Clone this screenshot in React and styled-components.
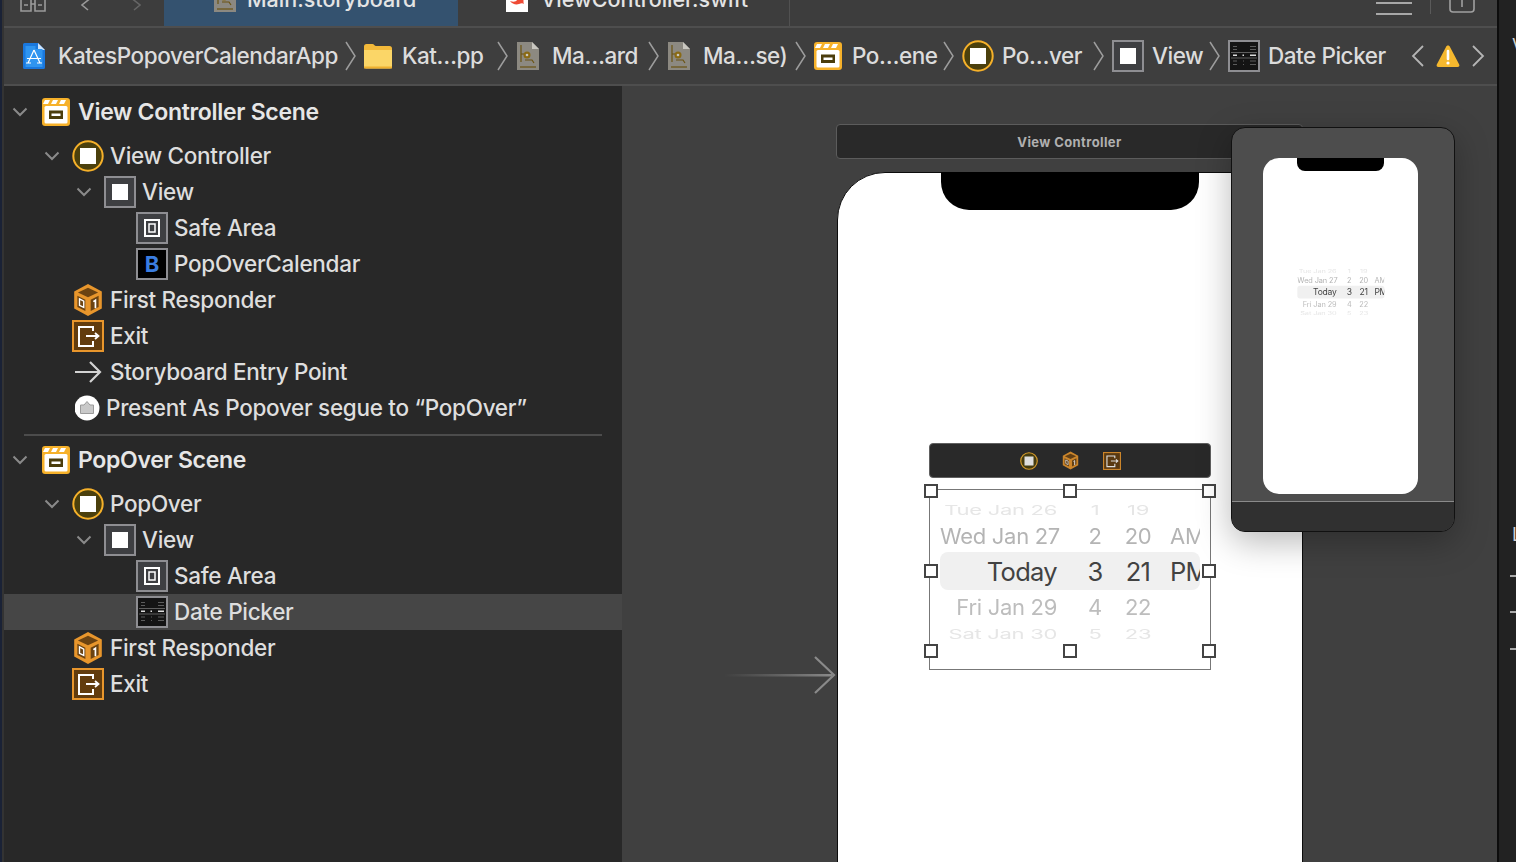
import React from 'react'
import styled, {createGlobalStyle} from 'styled-components'

const GlobalStyle = createGlobalStyle`
  html, body { margin: 0; padding: 0; background: #1f1f1f; }
  body { font-family: Inter, "Liberation Sans", sans-serif; }
`

const ORANGE = '#e8962c'
const YELLOW = '#f6b12a'

/* ---------- icons ---------- */

function ProjectIcon() {
  return (
    <svg width="24" height="28" viewBox="0 0 24 28">
      <path d="M1 2.500A1.500 1.500 0 0 1 2.500 1H16l7 7v17.500A1.500 1.500 0 0 1 21.500 27H2.500A1.500 1.500 0 0 1 1 25.500z" fill="#1a78de" />
      <path d="M16 1l7 7h-7z" fill="#cfe4fb" />
      <path d="M3.500 4h10v3h7v18h-17z" fill="#2f95f0" />
      <path d="M12 8L6 21M12 8l6 13M5 16.500h14M4 21h5M15 21h5" stroke="#fff" strokeWidth="1.200" fill="none" />
    </svg>
  )
}

function FolderIcon() {
  return (
    <svg width="28" height="26" viewBox="0 0 28 26">
      <path d="M0 3.500A2.500 2.500 0 0 1 2.500 1h6c1.500 0 2 2 3.500 2h13.500A2.500 2.500 0 0 1 28 5.500V9H0z" fill="#f3b93a" />
      <path d="M0 7h28v16.500a2 2 0 0 1-2 2H2a2 2 0 0 1-2-2z" fill="#fbd667" />
      <rect y="23.500" width="28" height="2" fill="#efb02f" />
    </svg>
  )
}

function StoryboardIcon() {
  return (
    <svg width="24" height="30" viewBox="0 0 24 30">
      <path d="M1 1h15l7 7v21H1z" fill="#8c8981" />
      <path d="M16 1l7 7h-7z" fill="#c9c7c0" />
      <path d="M5 4v9h3M5 13v8M9 19h7l2 3" stroke="#6b5312" strokeWidth="1.200" fill="none" />
      <circle cx="11" cy="14" r="3.500" fill="#8a6a14" />
      <circle cx="11" cy="14" r="1.300" fill="#c9c7c0" />
      <path d="M4 26h16" stroke="#6b5312" strokeWidth="1.200" />
    </svg>
  )
}

function SceneIcon() {
  return (
    <svg width="28" height="28" viewBox="0 0 28 28">
      <rect x="0" y="0" width="28" height="28" rx="3" fill={YELLOW} />
      <path d="M3 2h5l-2 4H1zM11 2h5l-2 4H9zM19 2h5l-2 4h-5z" fill="#fff" />
      <rect x="2.500" y="8" width="23" height="17.500" rx="1.500" fill="#fff" />
      <rect x="7" y="12.500" width="14" height="8.500" fill="#4b3d0c" />
      <rect x="9.500" y="15.500" width="9" height="2.500" fill="#fff" />
    </svg>
  )
}

function ControllerIcon({size = 32}) {
  return (
    <svg width={size} height={size} viewBox="0 0 32 32">
      <circle cx="16" cy="16" r="14.700" fill="#4b400d" stroke={YELLOW} strokeWidth="2" />
      <rect x="8" y="8" width="16" height="16" fill="#fff" />
    </svg>
  )
}

function ViewIcon() {
  return (
    <svg width="32" height="32" viewBox="0 0 32 32">
      <rect x="1" y="1" width="30" height="30" fill="#3e3f42" stroke="#8e8e92" strokeWidth="2" />
      <rect x="8" y="8" width="16" height="16" fill="#fff" />
    </svg>
  )
}

function SafeAreaIcon() {
  return (
    <svg width="32" height="32" viewBox="0 0 32 32">
      <rect x="1" y="1" width="30" height="30" fill="#3e3f42" stroke="#8e8e92" strokeWidth="2" />
      <rect x="9" y="8" width="14" height="16" fill="none" stroke="#fff" strokeWidth="2" />
      <rect x="13" y="12" width="6" height="8" fill="none" stroke="#fff" strokeWidth="1.500" />
    </svg>
  )
}

function PickerIcon() {
  return (
    <svg width="32" height="32" viewBox="0 0 32 32">
      <rect x="1" y="1" width="30" height="30" fill="#141414" stroke="#8e8e92" strokeWidth="2" />
      <path d="M5 6.500h4M22 6.500h6M5 9.500h4M22 9.500h6M5 21h4M15 21h1M22 21h6M5 24.500h4M15 24.500h1M22 24.500h6" stroke="#5c5c5c" strokeWidth="1.200" />
      <path d="M3 12.500h26M3 18h26" stroke="#5e5e5e" strokeWidth="1" />
      <path d="M5 15.300h4M14.500 15.300h1.500M22 15.300h6" stroke="#dcdcdc" strokeWidth="1.400" />
    </svg>
  )
}

function CubeIcon({size = 34}) {
  return (
    <svg width={size} height={size} viewBox="0 0 30 32">
      <path d="M15 1l13 7v16l-13 7-13-7V8z" fill={ORANGE} />
      <path d="M15 4.500L24.500 9 15 13.500 5.500 9z" fill="#6b4312" />
      <path d="M5 12l7.500 3.800v10.500L5 22.500z" fill="#6b4312" />
      <path d="M17.500 15.800L25 12v10.500l-7.500 3.800z" fill="#6b4312" />
      <path d="M7 15l4 2v6l-4-2z" fill="none" stroke="#fff" strokeWidth="1.300" />
      <path d="M20 17.500l2-1.300v7.500" fill="none" stroke="#fff" strokeWidth="1.600" />
    </svg>
  )
}

function ExitIcon({size = 32}) {
  return (
    <svg width={size} height={size} viewBox="0 0 32 32">
      <rect x="1" y="1" width="30" height="30" fill="#623c0d" stroke={ORANGE} strokeWidth="2" />
      <path d="M21 11V7H7v19h14v-5" fill="none" stroke="#fff" strokeWidth="2" />
      <path d="M14 16h12M23 13l3.500 3-3.500 3" fill="none" stroke="#fff" strokeWidth="1.800" />
    </svg>
  )
}

function EntryArrowIcon() {
  return (
    <svg width="30" height="24" viewBox="0 0 30 24">
      <path d="M2 12h25M17 2l10 10-10 10" fill="none" stroke="#d2d2d2" strokeWidth="2.200" />
    </svg>
  )
}

function SegueIcon() {
  return (
    <svg width="26" height="26" viewBox="1 0 26 26">
      <circle cx="13" cy="13" r="12.500" fill="#fff" />
      <path d="M6.500 10H10l3-3.500L16 10h3.500v8.500h-13z" fill="#c9c9c9" stroke="#9b9b9b" strokeWidth="1" />
    </svg>
  )
}

function BoldBadgeIcon() {
  return <BoldBadge>B</BoldBadge>
}

function Disclosure() {
  return (
    <svg width="16" height="10" viewBox="0 0 16 10">
      <path d="M1.500 1.500L8 8l6.500-6.500" fill="none" stroke="#8a8a8a" strokeWidth="2" />
    </svg>
  )
}

function PathChevron() {
  return (
    <svg width="11" height="30" viewBox="0 0 11 30">
      <path d="M1 1l9 14-9 14" fill="none" stroke="#9d9d9d" strokeWidth="1.500" />
    </svg>
  )
}

function WarningIcon() {
  return (
    <svg width="24" height="24" viewBox="0 0 24 24">
      <path d="M12 1.500c1 0 1.600.6 2 1.400l9.200 17.600c.6 1.300-.1 2.500-1.600 2.500H2.400c-1.500 0-2.200-1.200-1.600-2.500L10 2.900c.4-.8 1-1.400 2-1.400z" fill="#f5b82e" />
      <path d="M12 7v8" stroke="#fff" strokeWidth="2.600" strokeLinecap="round" />
      <circle cx="12" cy="19" r="1.600" fill="#fff" />
    </svg>
  )
}

function SwiftIcon() {
  return (
    <svg width="24" height="28" viewBox="0 0 24 28">
      <path d="M1 1h22v26H1z" fill="#fff" />
      <path d="M5 5c3 3 7 5 9 6-2-2-3-3-4-5 3 2 6 5 8 7 1 3 0 4 1 6-1-1-3-1-5 0-3 1-7 0-9-3 3 1 6 1 7-1-2-2-5-6-7-10z" fill="#ef4a35" />
    </svg>
  )
}

/* ---------- data ---------- */

const crumbs = [
  {w: 342, icon: <ProjectIcon />, label: 'KatesPopoverCalendarApp', gap: 12},
  {w: 152, icon: <FolderIcon />, label: 'Kat…pp', gap: 10},
  {w: 151, icon: <StoryboardIcon />, label: 'Ma…ard', gap: 12},
  {w: 147, icon: <StoryboardIcon />, label: 'Ma…se)', gap: 12},
  {w: 148, icon: <SceneIcon />, label: 'Po…ene', gap: 10},
  {w: 150, icon: <ControllerIcon />, label: 'Po…ver', gap: 8},
  {w: 116, icon: <ViewIcon />, label: 'View', gap: 8},
  {w: 160, icon: <PickerIcon />, label: 'Date Picker', gap: 8, last: true},
]

const firstScene = [
  {depth: 1, open: true, icon: <ControllerIcon />, label: 'View Controller'},
  {depth: 2, open: true, icon: <ViewIcon />, label: 'View'},
  {depth: 3, icon: <SafeAreaIcon />, label: 'Safe Area'},
  {depth: 3, icon: <BoldBadgeIcon />, label: 'PopOverCalendar'},
  {depth: 1, icon: <CubeIcon />, label: 'First Responder'},
  {depth: 1, icon: <ExitIcon />, label: 'Exit'},
  {depth: 1, icon: <EntryArrowIcon />, label: 'Storyboard Entry Point'},
  {depth: 1, icon: <SegueIcon />, label: 'Present As Popover segue to “PopOver”', tight: true},
]

const secondScene = [
  {depth: 1, open: true, icon: <ControllerIcon />, label: 'PopOver'},
  {depth: 2, open: true, icon: <ViewIcon />, label: 'View'},
  {depth: 3, icon: <SafeAreaIcon />, label: 'Safe Area'},
  {depth: 3, icon: <PickerIcon />, label: 'Date Picker', selected: true},
  {depth: 1, icon: <CubeIcon />, label: 'First Responder'},
  {depth: 1, icon: <ExitIcon />, label: 'Exit'},
]

const wheelRows = [
  {h: 18, size: 22, squash: 0.6, shade: '#e6e6e6', cells: ['Tue Jan 26', '1', '19', '']},
  {h: 33, size: 22, squash: 0.95, shade: '#b4b4b4', cells: ['Wed Jan 27', '2', '20', 'AM']},
  {h: 38, size: 25.500, squash: 1, shade: '#424242', active: true, cells: ['Today', '3', '21', 'PM']},
  {h: 34, size: 22, squash: 0.97, shade: '#bdbdbd', cells: ['Fri Jan 29', '4', '22', '']},
  {h: 20, size: 22, squash: 0.6, shade: '#e6e6e6', cells: ['Sat Jan 30', '5', '23', '']},
]

const handleSpots = [
  [1, 1], [140, 1], [279, 1],
  [1, 81], [279, 81],
  [1, 161], [140, 161], [279, 161],
]

/* ---------- parts ---------- */

function OutlineRow({row}) {
  return (
    <Row $depth={row.depth} $selected={row.selected}>
      <DisclosureSlot>{row.open && <Disclosure />}</DisclosureSlot>
      <IconSlot>{row.icon}</IconSlot>
      <RowLabel $tight={row.tight}>{row.label}</RowLabel>
    </Row>
  )
}

function SceneHeader({title}) {
  return (
    <Row $depth={0} $scene>
      <DisclosureSlot>
        <Disclosure />
      </DisclosureSlot>
      <IconSlot>
        <SceneIcon />
      </IconSlot>
      <SceneTitle>{title}</SceneTitle>
    </Row>
  )
}

function Wheel() {
  return (
    <WheelBox>
      {wheelRows.map(row => (
        <WheelRow key={row.cells[0]} $h={row.h} $active={row.active} $size={row.size} $shade={row.shade}>
          {row.cells.map((cell, i) => (
            <WheelCell key={i} $col={i} $squash={row.squash}>
              {cell}
            </WheelCell>
          ))}
        </WheelRow>
      ))}
    </WheelBox>
  )
}

export default function App() {
  return (
    <>
      <GlobalStyle />
      <Page>
        <LeftEdge />
        <Workspace>
          <TabBar>
            <TabTools>
              <svg width="26" height="14" viewBox="0 0 26 14">
                <path d="M1 1h10v12H1zM15 1h10v12H15zM4 7h4M18 7h4M11 6h4" fill="none" stroke="#9a9a9a" strokeWidth="1.600" />
              </svg>
              <NavArrow viewBox="0 0 14 14">
                <path d="M12-1L2 7l6 5" fill="none" stroke="#9a9a9a" strokeWidth="1.600" />
              </NavArrow>
              <NavArrow viewBox="0 0 14 14">
                <path d="M2-1l10 8-6 5" fill="none" stroke="#666" strokeWidth="1.600" />
              </NavArrow>
            </TabTools>
            <Tab $active>
              <StoryboardIcon />
              <span>Main.storyboard</span>
            </Tab>
            <Tab>
              <SwiftIcon />
              <span>ViewController.swift</span>
            </Tab>
            <TabEnd>
              <MenuLines />
              <TabSeparator />
              <svg width="26" height="14" viewBox="0 0 26 14">
                <path d="M1 0v9a3 3 0 0 0 3 3h18a3 3 0 0 0 3-3V0M13 0v7" fill="none" stroke="#a0a0a0" strokeWidth="1.600" />
              </svg>
            </TabEnd>
          </TabBar>

          <PathBar>
            {crumbs.map(crumb => (
              <Crumb key={crumb.label} $w={crumb.w}>
                {crumb.icon}
                <CrumbLabel $gap={crumb.gap}>{crumb.label}</CrumbLabel>
                {!crumb.last && <CrumbChevron><PathChevron /></CrumbChevron>}
              </Crumb>
            ))}
            <IssueNav>
              <svg width="14" height="24" viewBox="0 0 14 24">
                <path d="M12 2L2 12l10 10" fill="none" stroke="#b5b5b5" strokeWidth="1.800" />
              </svg>
              <WarningIcon />
              <svg width="14" height="24" viewBox="0 0 14 24">
                <path d="M2 2l10 10L2 22" fill="none" stroke="#b5b5b5" strokeWidth="1.800" />
              </svg>
            </IssueNav>
          </PathBar>

          <Main>
            <Outline>
              <SceneHeader title="View Controller Scene" />
              {firstScene.map(row => (
                <OutlineRow key={row.label} row={row} />
              ))}
              <SceneDivider />
              <SceneHeader title="PopOver Scene" />
              {secondScene.map(row => (
                <OutlineRow key={row.label} row={row} />
              ))}
            </Outline>

            <Canvas>
              <EntryArrow>
                <svg width="112" height="40" viewBox="0 0 112 40">
                  <defs>
                    <linearGradient id="entryFade" x1="0" x2="1" y1="0" y2="0">
                      <stop offset="0" stopColor="#7a7a7a" stopOpacity="0" />
                      <stop offset="1" stopColor="#8a8a8a" />
                    </linearGradient>
                  </defs>
                  <rect x="0" y="19" width="108" height="2.500" fill="url(#entryFade)" />
                  <path d="M91 2l19 18-19 18" fill="none" stroke="#8a8a8a" strokeWidth="2.200" />
                </svg>
              </EntryArrow>

              <SceneBar>View Controller</SceneBar>

              <Phone>
                <Notch />
                <Dock>
                  <ControllerIcon size={18} />
                  <CubeIcon size={19} />
                  <ExitIcon size={18} />
                </Dock>
                <PickerFrame>
                  <Wheel />
                  {handleSpots.map(([x, y]) => (
                    <Handle key={`${x}-${y}`} $x={x} $y={y} />
                  ))}
                </PickerFrame>
              </Phone>

              <Preview>
                <PreviewScreen>
                  <PreviewNotch />
                  <MiniWheel>
                    <Wheel />
                  </MiniWheel>
                </PreviewScreen>
                <PreviewFooter />
              </Preview>
            </Canvas>
          </Main>
        </Workspace>

        <Inspector>
          <InspectorGlyph $top={36}>V</InspectorGlyph>
          <InspectorGlyph $top={469}>L</InspectorGlyph>
          <InspectorDash $top={30} />
          <InspectorDash $top={34} />
          <InspectorDash $top={35} />
        </Inspector>
      </Page>
    </>
  )
}

/* ---------- styles ---------- */

const Page = styled.div`
  width: 1516px;
  height: 862px;
  display: flex;
  overflow: hidden;
  background: #282828;
  color: #dedede;
`

const LeftEdge = styled.div`
  width: 2px;
  flex: none;
  background: #1a2236;
  border-right: 2px solid #333;
`

const Workspace = styled.div`
  flex: none;
  width: 1493px;
  display: flex;
  flex-direction: column;
`

const TabBar = styled.div`
  height: 28px;
  box-sizing: border-box;
  flex: none;
  display: flex;
  align-items: stretch;
  background: #3d3d3d;
  border-bottom: 2px solid #4e4e4e;
  overflow: hidden;
`

const TabTools = styled.div`
  width: 160px;
  flex: none;
  padding: 0 0 14px 16px;
  display: flex;
  align-items: flex-end;
  gap: 28px;
  box-sizing: border-box;
`

const NavArrow = styled.svg`
  width: 14px;
  height: 14px;
  margin-left: 6px;
`

const Tab = styled.div`
  width: ${props => (props.$active ? 294 : 332)}px;
  flex: none;
  box-sizing: border-box;
  display: flex;
  align-items: flex-end;
  gap: ${props => (props.$active ? 10 : 12)}px;
  padding: 0 0 14px ${props => (props.$active ? 49 : 47)}px;
  background: ${props => (props.$active ? '#34526f' : 'transparent')};
  border-right: ${props => (props.$active ? 'none' : '1px solid #515151')};
  font-size: 21.500px;
  font-weight: 450;
  line-height: 26px;
  color: #e4e4e4;
  white-space: nowrap;

  svg {
    margin-bottom: -1px;
    flex: none;
  }
`

const TabEnd = styled.div`
  flex: 1;
  display: flex;
  align-items: flex-start;
  justify-content: flex-end;
  padding-right: 22px;
  gap: 18px;
`

const MenuLines = styled.div`
  width: 36px;
  height: 9px;
  margin-top: 2px;
  border-top: 2px solid #a8a8a8;
  border-bottom: 2px solid #a8a8a8;
`

const TabSeparator = styled.div`
  width: 1px;
  height: 14px;
  background: #5a5a5a;
`

const PathBar = styled.div`
  height: 58px;
  flex: none;
  box-sizing: border-box;
  display: flex;
  align-items: center;
  padding-left: 18px;
  background: #3e3e3e;
  border-bottom: 2px solid #4e4e4e;
`

const Crumb = styled.div`
  width: ${props => props.$w}px;
  flex: none;
  display: flex;
  align-items: center;

  > svg {
    flex: none;
  }
`

const CrumbLabel = styled.span`
  margin-left: ${props => props.$gap}px;
  font-size: 22.500px;
  font-weight: 450;
  letter-spacing: -0.450px;
  line-height: 30px;
  color: #dcdcdc;
  white-space: nowrap;
`

const CrumbChevron = styled.span`
  margin-left: auto;
  margin-right: 8px;
  display: flex;
`

const IssueNav = styled.div`
  margin-left: 23px;
  display: flex;
  align-items: center;
  gap: 11px;
`

const Main = styled.div`
  flex: 1;
  min-height: 0;
  display: flex;
`

const Outline = styled.div`
  width: 618px;
  flex: none;
  box-sizing: border-box;
  padding-top: 8px;
  background: #282828;
`

const Row = styled.div`
  height: 36px;
  display: flex;
  align-items: center;
  margin-bottom: ${props => (props.$scene ? 8 : 0)}px;
  padding-left: ${props => props.$depth * 32}px;
  background: ${props => (props.$selected ? '#464646' : 'transparent')};
`

const DisclosureSlot = styled.div`
  width: 32px;
  flex: none;
  display: flex;
  justify-content: center;
`

const IconSlot = styled.div`
  width: 32px;
  height: 32px;
  flex: none;
  margin-left: 4px;
  display: flex;
  align-items: center;
  justify-content: center;

  > svg {
    flex: none;
  }
`

const BoldBadge = styled.div`
  width: 32px;
  height: 32px;
  box-sizing: border-box;
  border: 2px solid #8e8e92;
  background: #000;
  color: #3a7de0;
  font-size: 22px;
  font-weight: 700;
  line-height: 28px;
  text-align: center;
`

const RowLabel = styled.span`
  margin-left: ${props => (props.$tight ? 2 : 6)}px;
  padding-bottom: 2px;
  font-size: 22.500px;
  font-weight: 450;
  letter-spacing: -0.300px;
  color: #dedede;
  white-space: nowrap;
`

const SceneTitle = styled.span`
  margin-left: 6px;
  font-size: 23px;
  font-weight: 600;
  letter-spacing: -0.300px;
  color: #e6e6e6;
  white-space: nowrap;
`

const SceneDivider = styled.div`
  height: 2px;
  margin: 8px 20px 6px 20px;
  background: #4c4c4c;
`

const Canvas = styled.div`
  flex: 1;
  position: relative;
  overflow: hidden;
  background: #404040;
`

const EntryArrow = styled.div`
  position: absolute;
  left: 102px;
  top: 569px;
  display: flex;
`

const SceneBar = styled.div`
  position: absolute;
  left: 214px;
  top: 38px;
  width: 467px;
  height: 35px;
  box-sizing: border-box;
  border: 1px solid #5c5c5c;
  border-radius: 4px;
  background: #292929;
  color: #b0b0b0;
  font-size: 13px;
  font-weight: 700;
  letter-spacing: 0.400px;
  line-height: 35px;
  text-align: center;
`

const Phone = styled.div`
  position: absolute;
  left: 215px;
  top: 86px;
  width: 466px;
  height: 900px;
  box-sizing: border-box;
  background: #fff;
  border: 1px solid #0c0c0c;
  border-radius: 48px 48px 0 0;
`

const Notch = styled.div`
  position: absolute;
  left: 103px;
  top: -1px;
  width: 258px;
  height: 38px;
  background: #000;
  border-radius: 0 0 28px 28px;
`

const Dock = styled.div`
  position: absolute;
  left: 91px;
  top: 270px;
  width: 282px;
  height: 35px;
  box-sizing: border-box;
  display: flex;
  align-items: center;
  justify-content: center;
  gap: 23px;
  background: #292929;
  border: 1px solid #606060;
  border-radius: 4px;

  svg {
    opacity: 0.85;
  }
`

const PickerFrame = styled.div`
  position: absolute;
  left: 91px;
  top: 316px;
  width: 282px;
  height: 181px;
  box-sizing: border-box;
  border: 1px solid #777;
`

const WheelBox = styled.div`
  width: 260px;
  margin-left: 10px;
  padding-top: 11px;
`

const WheelRow = styled.div`
  height: ${props => props.$h}px;
  display: grid;
  grid-template-columns: 130px 50px 36px 1fr;
  align-items: center;
  overflow: hidden;
  font-size: ${props => props.$size}px;
  letter-spacing: ${props => (props.$active ? -0.700 : -0.300)}px;
  color: ${props => props.$shade};
  border-radius: 8px;
  background: ${props => (props.$active ? '#f0f0f0' : 'transparent')};
  white-space: nowrap;
`

const WheelCell = styled.span`
  display: block;
  transform: scaleY(${props => props.$squash});
  text-align: ${props => (props.$col === 0 ? 'right' : props.$col === 3 ? 'left' : 'center')};
  padding-right: ${props => (props.$col === 0 ? 13 : 0)}px;
  padding-left: ${props => (props.$col === 3 ? 14 : 0)}px;
  overflow: hidden;
`

const Handle = styled.div`
  position: absolute;
  left: ${props => props.$x - 7}px;
  top: ${props => props.$y - 7}px;
  width: 14px;
  height: 14px;
  box-sizing: border-box;
  background: #fff;
  border: 2px solid #444;
`

const Preview = styled.div`
  position: absolute;
  left: 609px;
  top: 41px;
  width: 224px;
  height: 405px;
  box-sizing: border-box;
  display: flex;
  flex-direction: column;
  padding-top: 30px;
  background: #4d4d4d;
  border: 1px solid #111;
  border-radius: 14px;
  box-shadow: 0 10px 34px rgba(0, 0, 0, 0.28);
  overflow: hidden;
`

const PreviewScreen = styled.div`
  position: relative;
  margin-left: 31px;
  width: 155px;
  height: 336px;
  flex: none;
  background: #fff;
  border-radius: 16px;
  overflow: hidden;
`

const PreviewNotch = styled.div`
  position: absolute;
  left: 34px;
  top: 0;
  width: 87px;
  height: 13px;
  background: #000;
  border-radius: 0 0 8px 8px;
`

const MiniWheel = styled.div`
  position: absolute;
  left: 31px;
  top: 107px;
  width: 262px;
  transform: scale(0.335);
  transform-origin: 0 0;
  filter: blur(0.800px);
`

const PreviewFooter = styled.div`
  margin-top: 7px;
  flex: 1;
  background: #303030;
  border-top: 1px solid #8a8a8a;
`

const Inspector = styled.div`
  flex: none;
  width: 19px;
  box-sizing: border-box;
  border-left: 2px solid #0d0d0d;
  background: #222;
  overflow: hidden;
`

const InspectorGlyph = styled.div`
  margin: ${props => props.$top}px 0 0 13px;
  font-size: 18px;
  line-height: 20px;
  color: #cfcfcf;
`

const InspectorDash = styled.div`
  height: 2px;
  margin: ${props => props.$top}px 0 0 11px;
  background: #a8a8a8;
`
